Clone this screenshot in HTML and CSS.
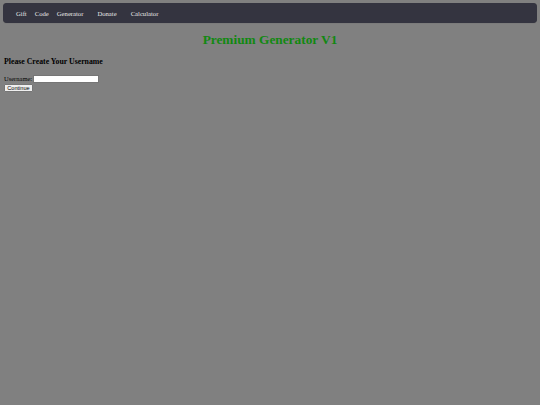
FILE: index.html
```html
<!DOCTYPE html>
<html>
<head>
<meta charset="utf-8">
<link rel="stylesheet" href="styles.css">
</head>
<body>
<nav class="nav">
  <a class="nav-link" href="#">Gift</a>
  <a class="nav-link" href="#">Code</a>
  <a class="nav-link" href="#">Generator</a>
  <a class="nav-link wide" href="#">Donate</a>
  <a class="nav-link wide" href="#">Calculator</a>
</nav>
<h1 class="title">Premium Generator V1</h1>
<h3 class="subtitle">Please Create Your Username</h3>
<form class="form">
  <div class="row"><label class="label">Username:</label><input class="input" type="text"></div>
  <button class="btn" type="button">Continue</button>
</form>
</body>
</html>
```
FILE: styles.css
```css
html, body {
  background: #808080;
}
body {
  margin: 3px;
  font-family: "Liberation Serif", "Times New Roman", serif;
  font-size: 6.67px;
  color: #000;
}
.nav {
  display: flex;
  align-items: center;
  height: 20px;
  background: #343440;
  border-radius: 4px;
  padding-left: 9px;
  box-shadow: 0 0 1px rgba(0,0,0,0.4);
}
.nav-link {
  color: #e6e6e6;
  text-decoration: none;
  font-size: 6.67px;
  padding: 0 4px;
}
.nav-link.wide {
  padding: 0 7px;
}
.nav-link.wide:first-of-type {
  margin-left: 3px;
}
.nav-link:nth-child(4) {
  margin-left: 3px;
}
.title {
  text-align: center;
  color: #118811;
  font-size: 13.33px;
  margin: 9px 0;
}
.subtitle {
  font-size: 7.8px;
  margin: 8px 0 8px 1px;
}
.form {
  margin: 0 0 0 1px;
}
.row {
  display: flex;
  align-items: center;
  height: 9px;
  margin-top: 1px;
}
.label {
  font-size: 6.5px;
}
.input {
  box-sizing: border-box;
  width: 66px;
  height: 8px;
  margin: 0 0 0 1px;
  padding: 0;
  border: 1px solid #767676;
  background: #fff;
  font-size: 5.5px;
}
.btn {
  display: block;
  box-sizing: border-box;
  width: 29px;
  height: 8px;
  margin-top: 1px;
  padding: 0;
  border: 1px solid #767676;
  border-radius: 1px;
  background: #efefef;
  font-family: "Liberation Sans", Arial, sans-serif;
  font-size: 5.6px;
  line-height: 6px;
  color: #000;
}
```
